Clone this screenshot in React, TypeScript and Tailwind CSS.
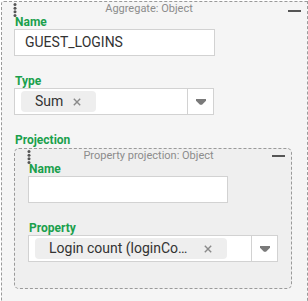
import React, { type ReactElement, type ReactNode } from "react";

const Dots = (): ReactElement => (
  <svg width="4" height="14" viewBox="0 0 4 14" className="block">
    <circle cx="2" cy="1.6" r="1.5" fill="#555" />
    <circle cx="2" cy="5.2" r="1.5" fill="#555" />
    <circle cx="2" cy="8.8" r="1.5" fill="#555" />
    <circle cx="2" cy="12.4" r="1.5" fill="#555" />
  </svg>
);

const Arrow = (): ReactElement => (
  <svg width="10" height="6" viewBox="0 0 10 6" className="block">
    <polygon points="0,0 10,0 10,1.8 6,5.8 4,5.8 0,1.8" fill="#7a7a7a" />
  </svg>
);

const Cross = (): ReactElement => (
  <svg width="8" height="8" viewBox="0 0 8 8" className="block shrink-0">
    <path d="M0.8 0.8 L7.2 7.2 M7.2 0.8 L0.8 7.2" stroke="#8a8a8a" strokeWidth="1.4" />
  </svg>
);

const Label = ({ children }: { children: ReactNode }): ReactElement => (
  <div className="pl-px text-[12px] leading-[14px] font-bold text-[#1aa04c]">{children}</div>
);

const TextInput = ({ value, width }: { value: string; width: string }): ReactElement => (
  <div
    className={`${width} flex h-[27px] items-center border border-[#d2d2d2] bg-white pl-[10px] text-[14px] text-[#333]`}
  >
    {value}
  </div>
);

const Chip = ({ text, width = "" }: { text: string; width?: string }): ReactElement => (
  <div className="flex h-[21px] items-center gap-[10px] rounded-[4px] bg-[#eeeeee] pr-[15px] pl-[14px]">
    <span className={`${width} text-[14px] leading-[21px] whitespace-nowrap text-[#333]`}>{text}</span>
    <Cross />
  </div>
);

const Select = ({ children, width }: { children: ReactNode; width: string }): ReactElement => (
  <div className={`${width} flex h-[27px] border border-[#d2d2d2] bg-white`}>
    <div className="flex flex-1 items-center pl-[6px]">{children}</div>
    <div className="flex w-[26px] items-center justify-center border-l border-[#d2d2d2]">
      <Arrow />
    </div>
  </div>
);

const Header = ({ title, shift }: { title: string; shift: string }): ReactElement => (
  <div className={`h-[13px] text-center text-[11px] leading-[13px] text-[#8c8c8c] ${shift}`}>{title}</div>
);

const App = (): ReactElement => {
  return (
    <div
      className="h-[301px] w-[308px] overflow-hidden bg-white"
      style={{ fontFamily: "Roboto, 'Liberation Sans', sans-serif" }}
    >
      <section className="relative mt-px ml-px h-[330px] w-[307px] rounded-tl-[3px] border border-dashed border-[#9a9a9a] bg-[#f5f5f5] px-3">
        <div className="absolute top-[1px] left-[11px]">
          <Dots />
        </div>
        <div className="absolute top-[8px] right-[6px] h-[2px] w-[13px] bg-[#555]" />
        <Header title="Aggregate: Object" shift="pr-[11px]" />

        <Label>Name</Label>
        <TextInput value="GUEST_LOGINS" width="w-[201px]" />

        <div className="mt-[18px]">
          <Label>Type</Label>
          <Select width="w-[200px]">
            <Chip text="Sum" />
          </Select>
        </div>

        <div className="mt-[18px]">
          <Label>Projection</Label>
          <div className="relative mt-px h-[141px] w-[278px] rounded-[5px] border border-dashed border-[#9a9a9a] bg-[#efefef] px-[13px]">
            <div className="absolute top-[1px] left-[12px]">
              <Dots />
            </div>
            <div className="absolute top-[6px] right-[6px] h-[2px] w-[13px] bg-[#555]" />
            <Header title="Property projection: Object" shift="pr-[9px]" />

            <Label>Name</Label>
            <TextInput value="" width="w-[200px]" />

            <div className="mt-[18px]">
              <Label>Property</Label>
              <Select width="w-full">
                <Chip text="Login count (loginCo…" width="w-[145px]" />
              </Select>
            </div>
          </div>
        </div>
      </section>
    </div>
  );
};

export default App;
